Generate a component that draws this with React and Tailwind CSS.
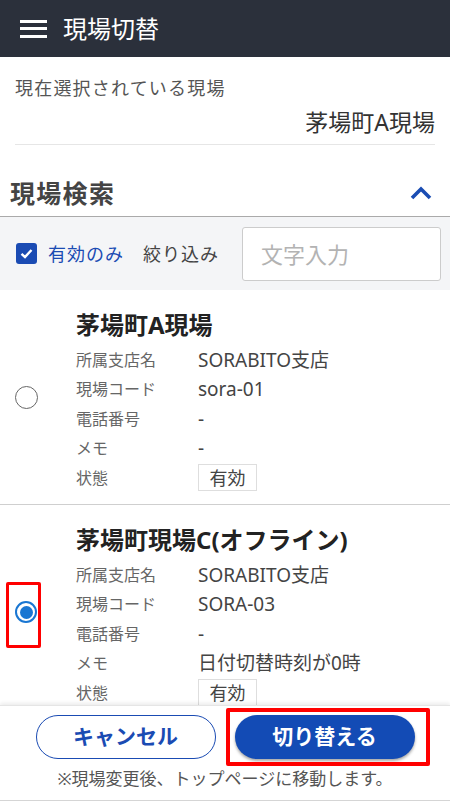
import React from "react";

const FONT = { fontFamily: '"Noto Sans", "Noto Sans CJK JP", sans-serif' };

function Row({ label, children }) {
  return (
    <div className="flex items-center h-[29.5px]">
      <div className="w-[122px] text-[16px] leading-[20px] text-[#666]">{label}</div>
      <div className="text-[19px] leading-[22px] text-[#444]">{children}</div>
    </div>
  );
}

function Badge() {
  return (
    <span className="inline-flex items-center justify-center w-[59px] h-[27px] border border-[#dedede] text-[18px] text-[#444]">
      有効
    </span>
  );
}

function Radio({ checked }) {
  if (checked) {
    return (
      <span className="flex items-center justify-center w-[22px] h-[22px] rounded-full border-2 border-[#1976d2]">
        <span className="w-[13px] h-[13px] rounded-full bg-[#1976d2]" />
      </span>
    );
  }
  return <span className="block w-[23px] h-[23px] rounded-full border-[1.5px] border-[#666]" />;
}

function Item({ title, checked, code, memo }) {
  return (
    <div className="flex h-[215px] border-b border-[#cfcfcf] shrink-0">
      <div className="w-[76px] flex items-center pl-[15px]">
        <Radio checked={checked} />
      </div>
      <div className="flex-1 pt-[20px]">
        <div className="text-[24px] leading-[30px] font-bold text-[#222]">{title}</div>
        <div className="mt-[5px]">
          <Row label="所属支店名">SORABITO支店</Row>
          <Row label="現場コード">{code}</Row>
          <Row label="電話番号">-</Row>
          <Row label="メモ">{memo}</Row>
          <Row label="状態">
            <Badge />
          </Row>
        </div>
      </div>
    </div>
  );
}

export default function App() {
  return (
    <div className="relative w-[450px] h-[801px] flex flex-col overflow-hidden bg-white" style={FONT}>
      {/* Header */}
      <div className="h-[57px] shrink-0 bg-[#2b303b] flex items-center pl-[20px]">
        <div className="flex flex-col gap-[4.5px] w-[27px]">
          <span className="block h-[3px] bg-white" />
          <span className="block h-[3px] bg-white" />
          <span className="block h-[3px] bg-white" />
        </div>
        <div className="ml-[16px] text-white text-[24px] leading-[30px]">現場切替</div>
      </div>

      {/* Current site */}
      <div className="shrink-0 mx-[15px] pt-[19px] pb-[10px] border-b border-[#e6e6e6]">
        <div className="text-[18px] leading-[24px] text-[#555] tracking-[1.2px]">現在選択されている現場</div>
        <div className="mt-[10px] text-right text-[23px] leading-[24px] text-[#333]">茅場町A現場</div>
      </div>

      {/* Search heading */}
      <div className="shrink-0 flex items-center justify-between pl-[10px] pr-[18px] pt-[33px] pb-[8px] border-b border-[#aaaaaa]">
        <div className="text-[25px] leading-[30px] font-bold text-[#444] tracking-[1.3px]">現場検索</div>
        <svg width="22" height="14" viewBox="0 0 22 14" className="-mt-[1px]">
          <path d="M2 12 L11 3 L20 12" fill="none" stroke="#1a4db3" strokeWidth="3.6" />
        </svg>
      </div>

      {/* Filter */}
      <div className="shrink-0 h-[73px] bg-[#f4f5f7] flex items-center pl-[16px] pr-[9px]">
        <span className="flex items-center justify-center w-[21px] h-[21px] rounded-[3px] bg-[#1a4bb3]">
          <svg width="15" height="15" viewBox="0 0 15 15">
            <path d="M2.5 7.8 L6 11 L12.5 4" fill="none" stroke="white" strokeWidth="2.4" />
          </svg>
        </span>
        <span className="ml-[11px] text-[18px] leading-[24px] text-[#1a4bb3] tracking-[1px]">有効のみ</span>
        <span className="ml-[19px] text-[18px] leading-[24px] text-[#444] tracking-[1px]">絞り込み</span>
        <input
          className="ml-auto w-[199px] h-[54px] bg-white border border-[#cccccc] rounded-[3px] pl-[18px] text-[22px] outline-none placeholder:text-[#b3b3b3]"
          placeholder="文字入力"
          style={FONT}
        />
      </div>

      {/* List */}
      <div className="flex-1 overflow-hidden flex flex-col">
        <Item title="茅場町A現場" code="sora-01" memo="-" />
        <Item title="茅場町現場C(オフライン)" code="SORA-03" memo="日付切替時刻が0時" checked />
      </div>

      {/* Footer */}
      <div className="shrink-0 h-[96px] bg-white border-t border-[#e5e5e5] shadow-[0_-2px_4px_rgba(0,0,0,0.08)] border-b border-b-[#d5d5d5] flex flex-col items-center pt-[9px]">
        <div className="flex gap-[19px]">
          <button className="w-[180px] h-[44px] rounded-full border border-[#1a4bb3] bg-white text-[#1a4bb3] text-[21px] font-bold" style={FONT}>
            キャンセル
          </button>
          <button className="w-[180px] h-[44px] rounded-full bg-[#134bb5] text-white text-[21px] font-bold shadow-[0_2px_3px_rgba(0,0,0,0.35)]" style={FONT}>
            切り替える
          </button>
        </div>
        <div className="mt-[10px] text-[17px] leading-[20px] text-[#555]">※現場変更後、トップページに移動します。</div>
      </div>

      {/* Annotation boxes */}
      <div className="absolute left-[6px] top-[582px] w-[35px] h-[66px] border-[3.5px] border-[#ff0000] rounded-[2px]" />
      <div className="absolute left-[226px] top-[708px] w-[204px] h-[58px] border-[4px] border-[#ff0000] rounded-[2px]" />
    </div>
  );
}
